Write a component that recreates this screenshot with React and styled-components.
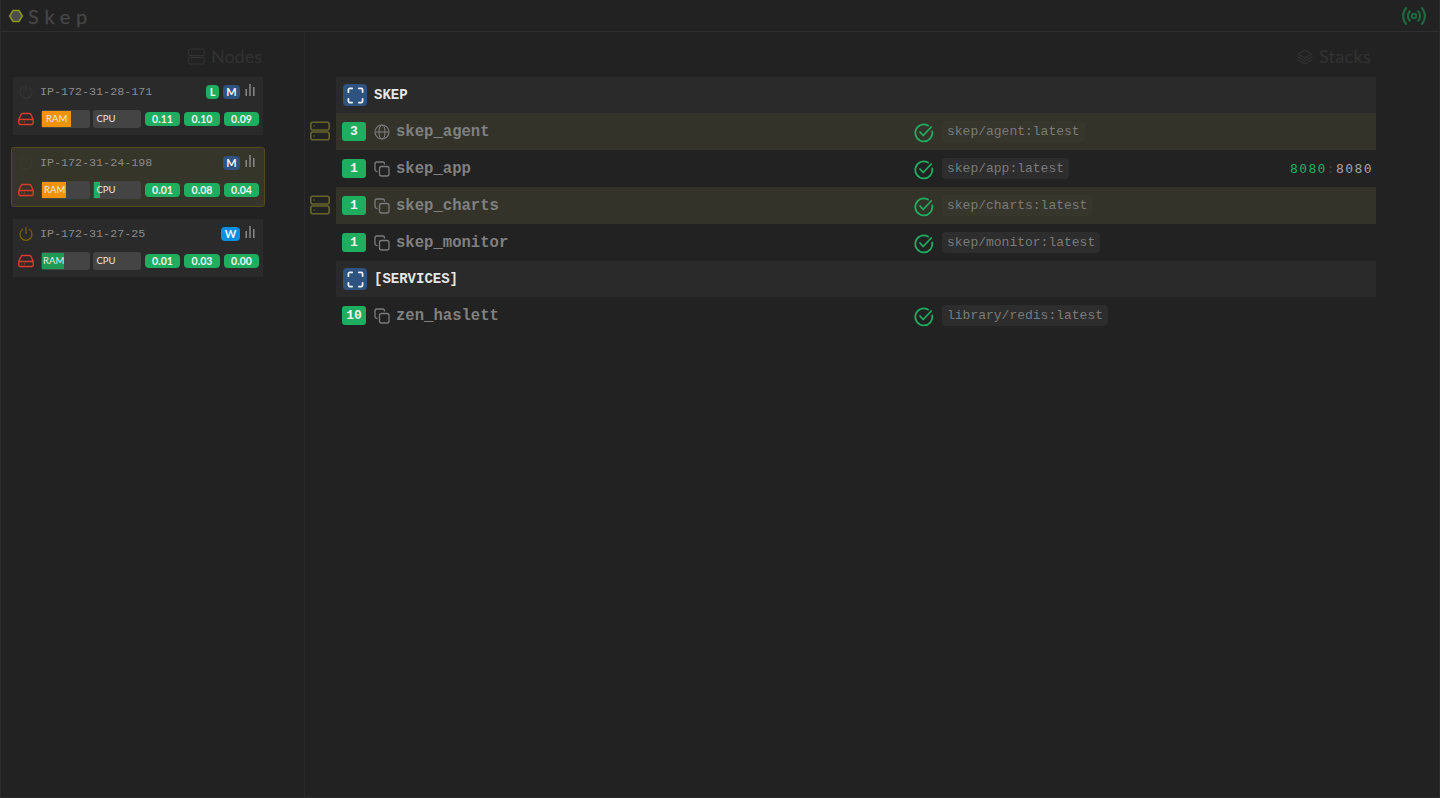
import React from "react";
import styled, { createGlobalStyle } from "styled-components";

const Global = createGlobalStyle`
  html, body { margin: 0; padding: 0; height: 100%; background: #222222; overflow: hidden; }
  * { box-sizing: border-box; }
  #root { height: 100%; }
`;

const Page = styled.div`
  width: 1440px; height: 798px; display: flex; flex-direction: column;
  background: #222222; font-family: Lato, sans-serif; border: 1px solid #2c2c2c; border-top: none;
`;
const Header = styled.header`
  height: 32px; flex: none; display: flex; align-items: center; justify-content: space-between;
  padding: 1px 12px 0 7px; border-bottom: 1px solid #2e2e2e;
`;
const Brand = styled.div`display: flex; align-items: center; gap: 4px;`;
const BrandName = styled.span`
  font: 400 20px/1 Lato, sans-serif; letter-spacing: 5.7px; color: #464646; -webkit-text-stroke: 0.3px #464646;
`;
const Body = styled.main`flex: 1; display: grid; grid-template-columns: 304px 1fr; min-height: 0;`;
const Left = styled.section`border-right: 1px solid #2a2a2a; padding: 14px 42px 0 12px; display: flex; flex-direction: column;`;
const Right = styled.section`padding: 14px 68px 0 31px; display: flex; flex-direction: column;`;
const Title = styled.h2`
  margin: 0 0 10px; height: 21px; display: flex; justify-content: flex-end; align-items: center; gap: ${p => p.$gap}px;
  font: 400 18px/21px Lato, sans-serif; letter-spacing: ${p => p.$ls || 0}px; color: #323232;
`;
const Card = styled.div`
  width: ${p => (p.$sel ? "254px" : "250px")};
  height: ${p => (p.$sel ? "60px" : "58px")};
  flex: none;
  margin: ${p => (p.$sel ? "12px 0 12px -2px" : "0")};
  padding: ${p => (p.$sel ? "3px 5px 0 6px" : "3px 4px 0 5px")};
  background: ${p => (p.$sel ? "#36352a" : "#2a2a2a")};
  border: ${p => (p.$sel ? "1px solid #544a1c" : "none")};
  border-radius: ${p => (p.$sel ? "3px" : "0")};
  display: flex; flex-direction: column; gap: 7px;
`;
const CardTop = styled.div`height: 23px; display: flex; align-items: center;`;
const CardBottom = styled.div`height: 18px; display: flex; align-items: center;`;
const Host = styled.span`
  margin-left: 6px; flex: 1;
  font: 400 11.7px "Liberation Mono", monospace; color: #8a8a8a;
`;
const Role = styled.span`
  height: 14px; width: ${p => p.$w}px; margin-right: ${p => p.$mr}px; border-radius: 4px;
  display: flex; align-items: center; justify-content: center;
  font: 700 11px/14px Lato, sans-serif; color: #f4f4f4; background: ${p => p.$bg};
`;
const Bar = styled.span`
  position: relative; width: 48.5px; height: 18px; margin-left: ${p => p.$ml}px; background: #444444; border-radius: 3px; overflow: hidden; display: block;
`;
const Fill = styled.span`position: absolute; left: 1px; top: 1px; bottom: 1px; background: ${p => p.$bg};`;
const BarLabel = styled.span`
  position: absolute; left: ${p => p.$l}px; top: 0; font: 400 9.5px/18px Lato, sans-serif; color: #e8e8e8;
`;
const Load = styled.span`
  width: ${p => p.$w}px; height: 14px; margin-left: 4px; border-radius: 4px; background: #1fad60;
  display: flex; align-items: center; justify-content: center;
  font: 700 10.5px/14px Lato, sans-serif; color: #f2f2f2;
`;
const ChartSlot = styled.span`width: 14px; height: 16px; flex: none; display: block; line-height: 0;`;
const Rows = styled.div`display: flex; flex-direction: column; margin-right: -5px;`;
const RowWrap = styled.div`position: relative;`;
const ServerMark = styled.span`position: absolute; left: -26px; top: 8px; display: block; line-height: 0;`;
const Row = styled.div`
  height: ${p => (p.$stack ? 36 : 37)}px; display: flex; align-items: center; padding-left: ${p => p.$stack ? 7 : 6}px; padding-right: 3px;
  background: ${p => p.$stack ? "#2a2a2a" : p.$hi ? "#33332a" : "transparent"};
`;
const StackIcon = styled.span`
  width: 24px; height: 22px; border-radius: 4px; background: #2f5380; display: flex; align-items: center; justify-content: center;
`;
const StackName = styled.span`
  margin-left: 7px; font: 700 14px "Liberation Mono", monospace; color: #e6e6e6;
`;
const Count = styled.span`
  width: 24px; height: 19px; border-radius: 3px; background: #1fad60; display: flex; align-items: center; justify-content: center;
  font: 700 13px "Liberation Mono", monospace; color: #f2f2f2;
`;
const TypeIcon = styled.span`margin-left: 8px; width: 16px; height: 16px; display: block; line-height: 0;`;
const ServiceName = styled.span`
  margin-left: 6px; width: 518px; font: 700 15.6px "Liberation Mono", monospace; color: #808080;
`;
const Check = styled.span`width: 20px; height: 20px; display: block; line-height: 0; margin-top: 3px;`;
const Image = styled.span`
  margin-left: 8px; height: 21px; padding: 0 5px; border-radius: 4px; background: ${p => p.$hi ? "#37362c" : "#2d2d2d"};
  font: 400 13px/21px "Liberation Mono", monospace; color: #7a7a7a;
`;
const Ports = styled.span`
  margin-left: auto; font: 400 13px/1 "DejaVu Sans Mono", monospace; letter-spacing: 1.4px; color: #a0a0a0;
`;
const Published = styled.span`color: #1fad60;`;
const Sep = styled.span`color: #444;`;

const Hex = () => (
  <svg width="16" height="16" viewBox="0 0 16 16"><polygon points="5,2.500 11,2.500 14.300,8 11,13.500 5,13.500 1.700,8" fill="#4d4d4d" stroke="#8d9a1f" strokeWidth="1.500" /></svg>
);
const Broadcast = () => (
  <svg width="26" height="24" viewBox="0 0 26 24" fill="none" stroke="#1d6a3f" strokeWidth="2.100" strokeLinecap="round">
    <circle cx="13" cy="12" r="2.200" />
    <path d="M8.800 7.200a7 7 0 0 0 0 9.600M17.200 7.200a7 7 0 0 1 0 9.600M5.200 4a12 12 0 0 0 0 16M20.800 4a12 12 0 0 1 0 16" />
  </svg>
);
const ServerIcon = ({ c = "#323232", s = 17, sw = 1.4 }) => (
  <svg width={s} height={s} viewBox="0 0 20 20" fill="none" stroke={c} strokeWidth={sw}>
    <rect x="0.800" y="1.200" width="18.400" height="7.800" rx="2" /><rect x="0.800" y="11" width="18.400" height="7.800" rx="2" />
    <path d="M3.500 5h1.500M3.500 15h1.500" strokeWidth="1" />
  </svg>
);
const Layers = () => (
  <svg width="18" height="18" viewBox="0 0 24 24" fill="none" stroke="#323232" strokeWidth="1.600" strokeLinejoin="round" strokeLinecap="round">
    <path d="M12 3 2.500 8 12 13l9.500-5z" /><path d="M2.500 12 12 17l9.500-5M2.500 16 12 21l9.500-5" />
  </svg>
);
const Power = ({ c }) => (
  <svg width="16" height="16" viewBox="0 0 16 16" fill="none" stroke={c} strokeWidth="1.300" strokeLinecap="round" style={{ flex: "none" }}>
    <path d="M8 1.500v6M4.700 3.300a6 6 0 1 0 6.600 0" />
  </svg>
);
const Chart = () => (
  <svg width="10" height="12" viewBox="0 0 10 12" style={{ display: "block" }} stroke="#8f8f8f" strokeWidth="1.400"><path d="M1.200 12V5M5 12V0M8.800 12V3" /></svg>
);
const Drive = () => (
  <svg width="16" height="14" viewBox="0 0 16 14" style={{ display: "block", flex: "none" }} fill="none" stroke="#e03a2a" strokeWidth="1.400" strokeLinejoin="round">
    <path d="M.8 7.500 3 2.500A1.500 1.500 0 0 1 4.400 1.500h7.200A1.500 1.500 0 0 1 13 2.500l2.200 5M.8 7.500h14.400v3.500a1.500 1.500 0 0 1-1.500 1.500H2.300A1.500 1.500 0 0 1 .8 11z" />
    <path d="M3.500 10h1M6 10h1" strokeWidth="1" />
  </svg>
);
const Scan = () => (
  <svg width="17" height="17" viewBox="0 0 18 18" fill="none" stroke="#eef2f6" strokeWidth="1.800" strokeLinecap="round">
    <path d="M1.500 5.500V3a1.500 1.500 0 0 1 1.500-1.500h2.500M12.500 1.500H15A1.500 1.500 0 0 1 16.500 3v2.500M16.500 12.500V15a1.500 1.500 0 0 1-1.500 1.500h-2.500M5.500 16.500H3A1.500 1.500 0 0 1 1.500 15v-2.500" />
  </svg>
);
const Globe = () => (
  <svg width="16" height="16" viewBox="0 0 16 16" fill="none" stroke="#7b7b7b" strokeWidth="1.100">
    <circle cx="8" cy="8" r="7" /><ellipse cx="8" cy="8" rx="3" ry="7" /><path d="M1 8h14" />
  </svg>
);
const Copy = () => (
  <svg width="16" height="16" viewBox="0 0 16 16" fill="none" stroke="#7b7b7b" strokeWidth="1.300">
    <rect x="5.500" y="5.500" width="9.500" height="9.500" rx="2" /><path d="M3.500 10.500H3A2 2 0 0 1 1 8.500V3a2 2 0 0 1 2-2h5.500a2 2 0 0 1 2 2v.5" />
  </svg>
);
const CheckCircle = () => (
  <svg width="20" height="20" viewBox="0 0 20 20" fill="none" stroke="#1fad60" strokeWidth="1.800" strokeLinecap="round" strokeLinejoin="round">
    <path d="M18.200 8.500a8.500 8.500 0 1 1-4.200-6" /><path d="M6 9l3.200 3.500 8-8.500" />
  </svg>
);

const nodes = [
  { ip: "IP-172-31-28-171", power: "#343434", roles: [["L", "#1fad60", 13, 4], ["M", "#2f5380", 17, 5]], ram: ["#f0930b", 29, 5], cpu: [null, 0, 4], load: ["0.11", "0.10", "0.09"] },
  { ip: "IP-172-31-24-198", sel: true, power: "#3b3a2d", roles: [["M", "#2f5380", 17, 5]], ram: ["#f0930b", 24, 3], cpu: ["#1fad60", 6, 4], load: ["0.01", "0.08", "0.04"] },
  { ip: "IP-172-31-27-25", power: "#7a5d0c", roles: [["W", "#0b8fe0", 19, 5]], ram: ["#1f9a55", 22, 2], cpu: [null, 0, 4], load: ["0.01", "0.03", "0.00"] },
];

const rows = [
  { stack: "SKEP" },
  { name: "skep_agent", n: 3, global: true, image: "skep/agent:latest", hi: true },
  { name: "skep_app", n: 1, image: "skep/app:latest", ports: true },
  { name: "skep_charts", n: 1, image: "skep/charts:latest", hi: true },
  { name: "skep_monitor", n: 1, image: "skep/monitor:latest" },
  { stack: "[SERVICES]" },
  { name: "zen_haslett", n: 10, image: "library/redis:latest" },
];

export default function App() {
  return (
    <Page>
      <Global />
      <Header>
        <Brand><Hex /><BrandName>Skep</BrandName></Brand>
        <Broadcast />
      </Header>
      <Body>
        <Left>
          <Title $gap={6}><ServerIcon s={17} />Nodes</Title>
          {nodes.map(n => (
            <Card key={n.ip} $sel={n.sel}>
              <CardTop>
                <Power c={n.power} />
                <Host>{n.ip}</Host>
                {n.roles.map(([r, bg, w, mr]) => <Role key={r} $bg={bg} $w={w} $mr={mr}>{r}</Role>)}
                <ChartSlot><Chart /></ChartSlot>
              </CardTop>
              <CardBottom>
                <Drive />
                <Bar $ml={7}>{n.ram[0] && <Fill $bg={n.ram[0]} style={{ width: n.ram[1] }} />}<BarLabel $l={n.ram[2]}>RAM</BarLabel></Bar>
                <Bar $ml={3}>{n.cpu[0] && <Fill $bg={n.cpu[0]} style={{ width: n.cpu[1] }} />}<BarLabel $l={n.cpu[2]}>CPU</BarLabel></Bar>
                <Load $w={35}>{n.load[0]}</Load>
                <Load $w={36}>{n.load[1]}</Load>
                <Load $w={35}>{n.load[2]}</Load>
              </CardBottom>
            </Card>
          ))}
        </Left>
        <Right>
          <Title $gap={5} $ls={0.3}><Layers />Stacks</Title>
          <Rows>
            {rows.map((r, i) => r.stack ? (
              <Row key={i} $stack>
                <StackIcon><Scan /></StackIcon>
                <StackName>{r.stack}</StackName>
              </Row>
            ) : (
              <RowWrap key={i}>
                {r.hi && <ServerMark><ServerIcon c="#66662a" s={20} sw={1.6} /></ServerMark>}
                <Row $hi={r.hi}>
                  <Count>{r.n}</Count>
                  <TypeIcon>{r.global ? <Globe /> : <Copy />}</TypeIcon>
                  <ServiceName>{r.name}</ServiceName>
                  <Check><CheckCircle /></Check>
                  <Image $hi={r.hi}>{r.image}</Image>
                  {r.ports && <Ports><Published>8080</Published><Sep>:</Sep>8080</Ports>}
                </Row>
              </RowWrap>
            ))}
          </Rows>
        </Right>
      </Body>
    </Page>
  );
}
